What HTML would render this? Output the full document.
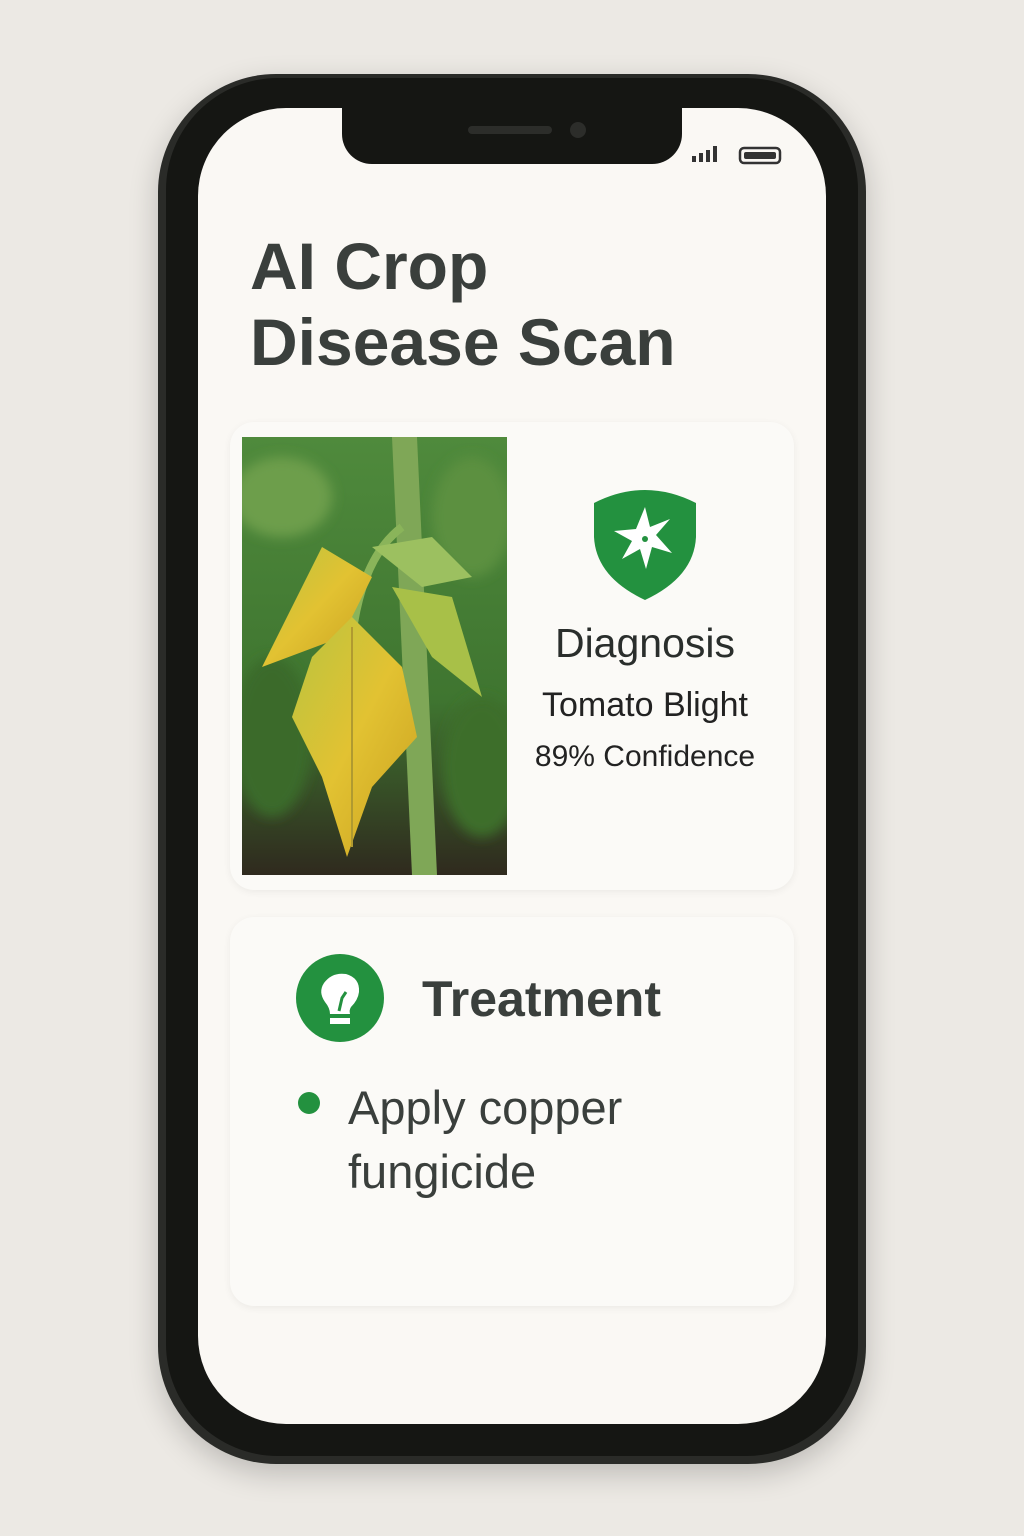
<!DOCTYPE html>
<html><head><style>
body{margin:0;width:1024px;height:1536px;background:#ece9e4;font-family:"Liberation Sans",sans-serif;position:relative;overflow:hidden}
.a{position:absolute}
.t{color:#3a3f3c;white-space:nowrap}
</style></head><body>
<div class="a" style="left:158px;top:74px;width:708px;height:1390px;border-radius:118px;background:#2a2b28;box-shadow:0 10px 30px rgba(0,0,0,.2)"></div>
<div class="a" style="left:166px;top:78px;width:692px;height:1378px;border-radius:112px;background:#151613"></div>
<div class="a" style="left:198px;top:108px;width:628px;height:1316px;border-radius:88px;background:#faf8f4"></div>
<div class="a" style="left:342px;top:100px;width:340px;height:64px;border-radius:0 0 30px 30px;background:#151613"></div>
<div class="a" style="left:468px;top:126px;width:84px;height:8px;border-radius:4px;background:#2c2d2a"></div>
<div class="a" style="left:570px;top:122px;width:16px;height:16px;border-radius:8px;background:#2c2d2a"></div>
<svg class="a" style="left:692px;top:144px" width="92" height="22"><rect x="0" y="12" width="4" height="6" fill="#333"/><rect x="7" y="9" width="4" height="9" fill="#333"/><rect x="14" y="6" width="4" height="12" fill="#333"/><rect x="21" y="2" width="4" height="16" fill="#333"/><rect x="48" y="4" width="40" height="15" rx="4" fill="none" stroke="#333" stroke-width="2.5"/><rect x="52" y="8" width="32" height="7" rx="2" fill="#333"/></svg>
<div class="a t" style="left:250px;top:228px;font-size:66px;font-weight:bold;line-height:76px">AI Crop<br>Disease Scan</div>
<div class="a" style="left:230px;top:422px;width:564px;height:468px;border-radius:24px;background:#fbfaf7;box-shadow:0 2px 8px rgba(0,0,0,.06)"></div>
<svg class="a" style="left:242px;top:437px" width="265" height="438">
<defs><linearGradient id="g" x1="0" y1="0" x2="0" y2="1"><stop offset="0" stop-color="#4f8a3c"/><stop offset=".6" stop-color="#3f7530"/><stop offset="1" stop-color="#2f2a1e"/></linearGradient>
<linearGradient id="l" x1="0" y1="0" x2="1" y2="1"><stop offset="0" stop-color="#b8c440"/><stop offset=".5" stop-color="#e2c232"/><stop offset="1" stop-color="#c9a020"/></linearGradient>
<filter id="b"><feGaussianBlur stdDeviation="6"/></filter></defs>
<rect width="265" height="438" fill="url(#g)"/>
<g filter="url(#b)"><ellipse cx="40" cy="60" rx="50" ry="40" fill="#6d9e4c"/><ellipse cx="230" cy="80" rx="40" ry="60" fill="#5c9040"/><ellipse cx="30" cy="300" rx="40" ry="80" fill="#3a6a2a"/><ellipse cx="240" cy="330" rx="40" ry="70" fill="#3d6e2c"/></g>
<path d="M150 0 L175 0 L195 438 L170 438 Z" fill="#7fa757"/>
<path d="M160 90 Q120 120 110 200" stroke="#8ab45a" stroke-width="8" fill="none"/>
<path d="M130 110 L190 100 L230 140 L180 150 Z" fill="#9cc060"/>
<path d="M150 150 L210 160 L240 260 L190 220 Z" fill="#a8c048"/>
<path d="M80 110 L130 140 L100 200 L20 230 L50 170 Z" fill="url(#l)"/>
<path d="M110 180 L160 230 L175 300 L130 350 L105 420 L80 340 L50 280 L70 220 Z" fill="url(#l)"/>
<path d="M110 190 L110 410" stroke="#b09a30" stroke-width="2"/>
</svg>
<svg class="a" style="left:594px;top:487px" width="102" height="114" viewBox="0 0 102 114"><path d="M0 16 Q51 -10 102 16 L102 50 Q100 90 51 113 Q2 90 0 50 Z" fill="#23913f"/>
<path d="M51 20 L56 40 L76 32 L62 48 L78 66 L58 60 L52 82 L46 62 L28 72 L38 54 L20 44 L42 42 Z" fill="#fff"/><circle cx="51" cy="52" r="3" fill="#23913f"/></svg>
<div class="a t" style="left:520px;width:250px;top:620px;text-align:center;font-size:41px;color:#2a2e2c">Diagnosis</div>
<div class="a t" style="left:520px;width:250px;top:686px;text-align:center;font-size:34px;color:#222">Tomato Blight</div>
<div class="a t" style="left:520px;width:250px;top:740px;text-align:center;font-size:30px;color:#222">89% Confidence</div>
<div class="a" style="left:230px;top:917px;width:564px;height:389px;border-radius:24px;background:#fbfaf7;box-shadow:0 2px 8px rgba(0,0,0,.06)"></div>
<svg class="a" style="left:296px;top:954px" width="88" height="88" viewBox="0 0 88 88"><circle cx="44" cy="44" r="44" fill="#23913f"/><path d="M34 60 Q34 54 29 48 Q22 38 28 29 Q36 18 50 20 Q64 24 63 38 Q62 46 55 53 Q53 56 54 60 Z" fill="#fff"/><path d="M43 57 L46 44 L50 38" stroke="#23913f" stroke-width="3" fill="none"/><rect x="34" y="64" width="20" height="6" fill="#fff"/></svg>
<div class="a t" style="left:422px;top:970px;font-size:50px;font-weight:bold">Treatment</div>
<div class="a" style="left:298px;top:1092px;width:22px;height:22px;border-radius:11px;background:#23913f"></div>
<div class="a t" style="left:348px;top:1076px;font-size:47px;line-height:64px">Apply copper<br>fungicide</div>
</body></html>
